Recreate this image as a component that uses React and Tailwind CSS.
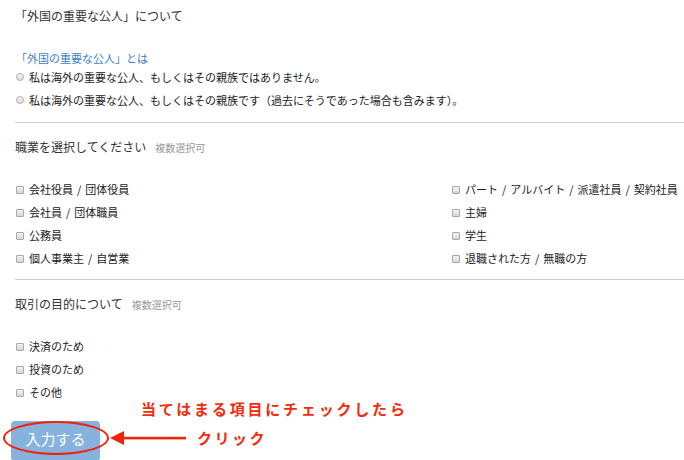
import React from 'react';

const font = { fontFamily: '"Noto Sans CJK JP", "Noto Sans", sans-serif' };

function Label({ text }) {
    const parts = text.split(' / ');
    return (
        <span>
            {parts.map((p, i) => (
                <React.Fragment key={i}>
                    {i > 0 && <span className="mx-[4px]">/</span>}
                    {p}
                </React.Fragment>
            ))}
        </span>
    );
}

function Radio({ label }) {
    return (
        <div className="h-[20px] flex items-center gap-[5px] pl-[1px] text-[11px] text-[#222]">
            <span className="w-[8px] h-[8px] rounded-full border border-[#b0b0b0] bg-gradient-to-b from-[#f6f6f6] to-[#dcdcdc]" />
            <span>{label}</span>
        </div>
    );
}

function Check({ label }) {
    return (
        <div className="h-[23px] flex items-center gap-[5px] pl-[1px] text-[11px] text-[#222]">
            <span className="w-[8px] h-[8px] rounded-[1px] border border-[#a8a8a8] bg-gradient-to-b from-[#f4f4f4] to-[#d6d6d6]" />
            <Label text={label} />
        </div>
    );
}

function Heading({ title }) {
    return (
        <div className="h-[20px] flex items-center gap-[9px]">
            <span className="text-[12px] text-[#333]">{title}</span>
            <span className="text-[10px] text-[#999]">複数選択可</span>
        </div>
    );
}

export default function App() {
    const left = ['会社役員 / 団体役員', '会社員 / 団体職員', '公務員', '個人事業主 / 自営業'];
    const right = ['パート / アルバイト / 派遣社員 / 契約社員', '主婦', '学生', '退職された方 / 無職の方'];

    return (
        <div className="relative w-[684px] h-[460px] overflow-hidden bg-white pl-[15px]" style={font}>
            <div className="h-[32px] flex items-center text-[12px] text-[#333]">「外国の重要な公人」について</div>

            <div className="mt-[17px] h-[18px] flex items-center pl-[1px] text-[11px] text-[#3d7fc6]">「外国の重要な公人」とは</div>
            <Radio label="私は海外の重要な公人、もしくはその親族ではありません。" />
            <div className="mt-[3px]">
                <Radio label="私は海外の重要な公人、もしくはその親族です（過去にそうであった場合も含みます）。" />
            </div>

            <div className="mt-[12px] border-t border-[#cccccc]" />

            <div className="mt-[14px]">
                <Heading title="職業を選択してください" />
            </div>
            <div className="mt-[21px] grid grid-cols-[436px_1fr]">
                <div>
                    {left.map((l) => <Check key={l} label={l} />)}
                </div>
                <div>
                    {right.map((l) => <Check key={l} label={l} />)}
                </div>
            </div>

            <div className="mt-[9px] border-t border-[#cccccc]" />

            <div className="mt-[14px]">
                <Heading title="取引の目的について" />
            </div>
            <div className="mt-[21px]">
                <Check label="決済のため" />
                <Check label="投資のため" />
                <Check label="その他" />
            </div>

            <button className="mt-[17px] -ml-[4px] w-[89px] h-[40px] pb-[4px] rounded-[4px] bg-[#86b2de] text-white text-[15px] flex items-center justify-center">
                入力する
            </button>

            {/* annotation overlay */}
            <div className="absolute left-[3px] top-[421px] w-[106px] h-[34px] rounded-[50%] border-[2.5px] border-[#f0230a]" />
            <svg className="absolute left-[108px] top-[429px]" width="80" height="18" viewBox="0 0 80 18">
                <polygon points="2,9 16,2 16,16" fill="#f0230a" />
                <rect x="14" y="7.8" width="64" height="2.6" fill="#f0230a" />
            </svg>
            <div className="absolute left-[141px] top-[399px] text-[15px] font-bold tracking-[2.8px] text-[#f52a0a] leading-[20px]">
                当てはまる項目にチェックしたら
            </div>
            <div className="absolute left-[197px] top-[428px] text-[15px] font-bold tracking-[2.5px] text-[#f52a0a] leading-[20px]">
                クリック
            </div>
        </div>
    );
}
